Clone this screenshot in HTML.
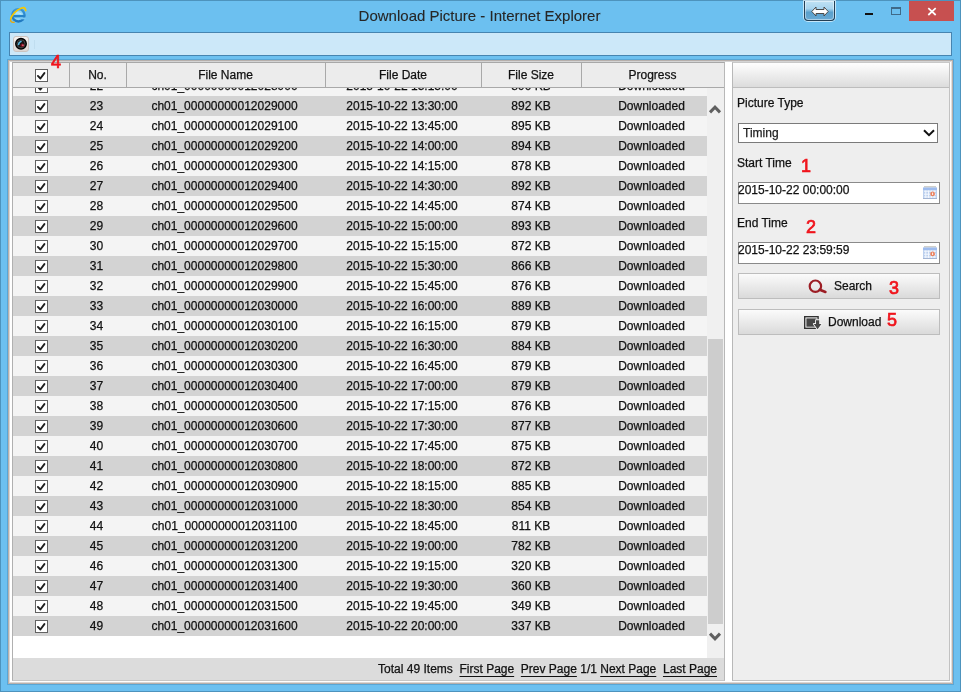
<!DOCTYPE html>
<html><head><meta charset="utf-8">
<style>
*{margin:0;padding:0;box-sizing:border-box}
html,body{width:961px;height:692px;overflow:hidden;background:#6cc0f0;font-family:"Liberation Sans",sans-serif;font-size:12px;color:#000;-webkit-text-stroke:0.25px currentColor}
.a{position:absolute}
.row{position:absolute;left:0;width:694px;height:20px}
.row .t{position:absolute;top:0;height:20px;line-height:20px;text-align:center;white-space:nowrap;color:#111}
.row .c{position:absolute;height:13px}
.cb{display:block}
.hd{position:absolute;top:0;height:25px;line-height:25px;text-align:center;color:#111;border-right:1px solid #a9a9a9}
.lbl{position:absolute;left:4px;color:#111}
.red{position:absolute;color:#f0141c;font-weight:normal;font-size:18px;-webkit-text-stroke:0.7px #f0141c}
.btn{position:absolute;left:6px;width:202px;height:26px;border:1px solid #bdbdbd;background:linear-gradient(#fbfbfb,#dadada)}
.inp{position:absolute;left:6px;width:202px;height:22px;border:1px solid #8a8a8a;background:#fff;line-height:14px;padding-left:0;text-indent:-1px;color:#111}
.ft a{color:#111;text-decoration:underline;text-underline-offset:3px;text-decoration-skip-ink:none}
</style></head><body><div style="position:absolute;left:0;top:0;width:961px;height:692px;will-change:transform">
<!-- window frame -->
<div class="a" style="left:0;top:0;width:961px;height:692px;border:1px solid #4d93bd;background:#6cc0f0"></div>
<!-- IE logo -->
<svg class="a" style="left:6px;top:4px" width="24" height="22" viewBox="0 0 24 22">
  <defs><linearGradient id="eg" x1="0" y1="0" x2="0" y2="1"><stop offset="0" stop-color="#3b97d8"/><stop offset="1" stop-color="#1f78c0"/></linearGradient></defs>
  <circle cx="12.4" cy="11.3" r="6.2" fill="#8fd6f6" stroke="url(#eg)" stroke-width="2.3"/>
  <path d="M7.2 12.2 H18.8" stroke="#2683c8" stroke-width="2.4"/>
  <path d="M13.8 13.5 H19.8 V15.3 H13.8Z" fill="#7cc8f2"/>
  <path d="M9.8 9.2 Q12.5 8 15.6 10.3" stroke="#bfe9fb" stroke-width="1.2" fill="none"/>
  <path d="M4.6 15.5 C5.5 11 10 6 15 4.2 C18 3.2 19.9 3.3 19.7 7.2" fill="none" stroke="#f7c800" stroke-width="1.7"/>
  <path d="M4.6 15.3 C4.2 17.5 5.6 18.8 8.6 18.2" fill="none" stroke="#f2a900" stroke-width="1.4"/>
</svg>
<!-- title -->
<div class="a" style="left:-1px;top:7px;width:961px;text-align:center;font-size:15px;color:#262626;-webkit-text-stroke:0.1px #262626">Download Picture - Internet Explorer</div>
<!-- title buttons -->
<div class="a" style="left:804px;top:1px;width:31px;height:20px;border:1px solid #233f55;border-top:none;border-radius:0 0 4px 4px;background:linear-gradient(#c0e2f4 0%,#a8d4ee 40%,#5aa0cc 60%,#6aaad4 100%);box-shadow:0 0 0 1px rgba(255,255,255,.6), inset 0 0 0 1px rgba(255,255,255,.45)"></div>
<svg class="a" style="left:811px;top:6px" width="18" height="11" viewBox="0 0 18 11"><path d="M0.8 5.5 L5 1 V3.5 H13 V1 L17.2 5.5 L13 10 V7.5 H5 V10 Z" fill="#fff" stroke="#4a4a4a" stroke-width="1"/></svg>
<div class="a" style="left:865px;top:13px;width:8px;height:2px;background:#111"></div>
<div class="a" style="left:891px;top:7px;width:10px;height:8px;border:1px solid #3f6a88;border-top-width:2px"></div>
<div class="a" style="left:909px;top:1px;width:45px;height:20px;background:#c75050"></div>
<svg class="a" style="left:927px;top:7px" width="10" height="9" viewBox="0 0 10 9"><path d="M1.3 1.2 L8.7 8 M8.7 1.2 L1.3 8" stroke="#fff" stroke-width="1.7"/></svg>

<!-- toolbar -->
<div class="a" style="left:9px;top:32px;width:943px;height:24px;border:1px solid #4684b0;background:#cce8f9"></div>
<div class="a" style="left:13px;top:36px;width:16px;height:16px;border-radius:3px;background:linear-gradient(#f6f3f1,#dcd6d3);border:1px solid #cbc3bf"></div>
<svg class="a" style="left:13px;top:36px" width="16" height="16" viewBox="0 0 16 16"><circle cx="8" cy="7.8" r="5.3" fill="#151515" stroke="#000" stroke-width="1.3"/><circle cx="8" cy="7.8" r="4" fill="none" stroke="#505050" stroke-width="0.8"/><path d="M5.6 8.4 C5.7 7.1 6.5 6 7.9 5.5" stroke="#5ab8e0" stroke-width="1.7" fill="none" stroke-linecap="round"/><circle cx="9.3" cy="9.3" r="1.8" fill="#7e1020"/><ellipse cx="9.9" cy="9.2" rx="1" ry="0.6" fill="#e8788a"/></svg>
<div class="a" style="left:34px;top:40px;width:1px;height:9px;background:#c0def0"></div>

<!-- content area -->
<div class="a" style="left:7px;top:59px;width:947px;height:626px;background:#58a6d6"></div>
<div class="a" style="left:8px;top:60px;width:945px;height:624px;border:1px solid #b6afab;background:#fff"></div>
<div class="a" style="left:9px;top:61px;width:943px;height:1px;background:#d4d4d4"></div>
<div class="a" style="left:9px;top:61px;width:1px;height:621px;background:#d8d8d8"></div>
<div class="a" style="left:9px;top:682px;width:943px;height:1px;background:#dad6d4"></div>
<div class="a" style="left:951px;top:61px;width:1px;height:622px;background:#e2dfdd"></div>

<!-- left table panel -->
<div class="a" style="left:12px;top:62px;width:713px;height:619px;border-left:1px solid #b0b0b0;border-top:1px solid #a8a8a8;border-right:1px solid #b8b8b8;border-bottom:1px solid #c6c6c6;background:#fff;overflow:hidden">
  <!-- header -->
  <div class="a" style="left:0;top:0;width:711px;height:25px;background:#ececec;border-bottom:1px solid #a9a9a9">
    <div class="hd" style="left:0;width:57px"><div class="a" style="left:22px;top:6px"><svg class="cb" width="13" height="13" viewBox="0 0 13 13"><rect x="0.5" y="0.5" width="12" height="12" fill="#fff" stroke="#626262"/><path d="M2.9 6.9 L5.4 9.5 L9.4 4.1" fill="none" stroke="#1e1e1e" stroke-width="1.9" stroke-linecap="round" stroke-linejoin="round"/></svg></div></div>
    <div class="hd" style="left:56px;width:58px">No.</div>
    <div class="hd" style="left:113px;width:200px">File Name</div>
    <div class="hd" style="left:312px;width:157px">File Date</div>
    <div class="hd" style="left:468px;width:101px">File Size</div>
    <div class="hd" style="left:568px;width:143px;border-right:none">Progress</div>
  </div>
  <!-- rows viewport -->
  <div class="a" style="left:0;top:25px;width:694px;height:570px;overflow:hidden;background:#fff">
<div class="row" style="top:-12px;background:#f4f4f4"><div class="c" style="left:22px;top:4px;width:13px"><svg class="cb" width="13" height="13" viewBox="0 0 13 13"><rect x="0.5" y="0.5" width="12" height="12" fill="#fff" stroke="#626262"/><path d="M2.9 6.9 L5.4 9.5 L9.4 4.1" fill="none" stroke="#1e1e1e" stroke-width="1.9" stroke-linecap="round" stroke-linejoin="round"/></svg></div><div class="t" style="left:55px;width:57px">22</div><div class="t" style="left:112px;width:199px">ch01_00000000012028900</div><div class="t" style="left:311px;width:156px">2015-10-22 13:15:00</div><div class="t" style="left:468px;width:100px">890 KB</div><div class="t" style="left:567px;width:143px">Downloaded</div></div>
<div class="row" style="top:8px;background:#d3d3d3"><div class="c" style="left:22px;top:4px;width:13px"><svg class="cb" width="13" height="13" viewBox="0 0 13 13"><rect x="0.5" y="0.5" width="12" height="12" fill="#fff" stroke="#626262"/><path d="M2.9 6.9 L5.4 9.5 L9.4 4.1" fill="none" stroke="#1e1e1e" stroke-width="1.9" stroke-linecap="round" stroke-linejoin="round"/></svg></div><div class="t" style="left:55px;width:57px">23</div><div class="t" style="left:112px;width:199px">ch01_00000000012029000</div><div class="t" style="left:311px;width:156px">2015-10-22 13:30:00</div><div class="t" style="left:468px;width:100px">892 KB</div><div class="t" style="left:567px;width:143px">Downloaded</div></div>
<div class="row" style="top:28px;background:#f4f4f4"><div class="c" style="left:22px;top:4px;width:13px"><svg class="cb" width="13" height="13" viewBox="0 0 13 13"><rect x="0.5" y="0.5" width="12" height="12" fill="#fff" stroke="#626262"/><path d="M2.9 6.9 L5.4 9.5 L9.4 4.1" fill="none" stroke="#1e1e1e" stroke-width="1.9" stroke-linecap="round" stroke-linejoin="round"/></svg></div><div class="t" style="left:55px;width:57px">24</div><div class="t" style="left:112px;width:199px">ch01_00000000012029100</div><div class="t" style="left:311px;width:156px">2015-10-22 13:45:00</div><div class="t" style="left:468px;width:100px">895 KB</div><div class="t" style="left:567px;width:143px">Downloaded</div></div>
<div class="row" style="top:48px;background:#d3d3d3"><div class="c" style="left:22px;top:4px;width:13px"><svg class="cb" width="13" height="13" viewBox="0 0 13 13"><rect x="0.5" y="0.5" width="12" height="12" fill="#fff" stroke="#626262"/><path d="M2.9 6.9 L5.4 9.5 L9.4 4.1" fill="none" stroke="#1e1e1e" stroke-width="1.9" stroke-linecap="round" stroke-linejoin="round"/></svg></div><div class="t" style="left:55px;width:57px">25</div><div class="t" style="left:112px;width:199px">ch01_00000000012029200</div><div class="t" style="left:311px;width:156px">2015-10-22 14:00:00</div><div class="t" style="left:468px;width:100px">894 KB</div><div class="t" style="left:567px;width:143px">Downloaded</div></div>
<div class="row" style="top:68px;background:#f4f4f4"><div class="c" style="left:22px;top:4px;width:13px"><svg class="cb" width="13" height="13" viewBox="0 0 13 13"><rect x="0.5" y="0.5" width="12" height="12" fill="#fff" stroke="#626262"/><path d="M2.9 6.9 L5.4 9.5 L9.4 4.1" fill="none" stroke="#1e1e1e" stroke-width="1.9" stroke-linecap="round" stroke-linejoin="round"/></svg></div><div class="t" style="left:55px;width:57px">26</div><div class="t" style="left:112px;width:199px">ch01_00000000012029300</div><div class="t" style="left:311px;width:156px">2015-10-22 14:15:00</div><div class="t" style="left:468px;width:100px">878 KB</div><div class="t" style="left:567px;width:143px">Downloaded</div></div>
<div class="row" style="top:88px;background:#d3d3d3"><div class="c" style="left:22px;top:4px;width:13px"><svg class="cb" width="13" height="13" viewBox="0 0 13 13"><rect x="0.5" y="0.5" width="12" height="12" fill="#fff" stroke="#626262"/><path d="M2.9 6.9 L5.4 9.5 L9.4 4.1" fill="none" stroke="#1e1e1e" stroke-width="1.9" stroke-linecap="round" stroke-linejoin="round"/></svg></div><div class="t" style="left:55px;width:57px">27</div><div class="t" style="left:112px;width:199px">ch01_00000000012029400</div><div class="t" style="left:311px;width:156px">2015-10-22 14:30:00</div><div class="t" style="left:468px;width:100px">892 KB</div><div class="t" style="left:567px;width:143px">Downloaded</div></div>
<div class="row" style="top:108px;background:#f4f4f4"><div class="c" style="left:22px;top:4px;width:13px"><svg class="cb" width="13" height="13" viewBox="0 0 13 13"><rect x="0.5" y="0.5" width="12" height="12" fill="#fff" stroke="#626262"/><path d="M2.9 6.9 L5.4 9.5 L9.4 4.1" fill="none" stroke="#1e1e1e" stroke-width="1.9" stroke-linecap="round" stroke-linejoin="round"/></svg></div><div class="t" style="left:55px;width:57px">28</div><div class="t" style="left:112px;width:199px">ch01_00000000012029500</div><div class="t" style="left:311px;width:156px">2015-10-22 14:45:00</div><div class="t" style="left:468px;width:100px">874 KB</div><div class="t" style="left:567px;width:143px">Downloaded</div></div>
<div class="row" style="top:128px;background:#d3d3d3"><div class="c" style="left:22px;top:4px;width:13px"><svg class="cb" width="13" height="13" viewBox="0 0 13 13"><rect x="0.5" y="0.5" width="12" height="12" fill="#fff" stroke="#626262"/><path d="M2.9 6.9 L5.4 9.5 L9.4 4.1" fill="none" stroke="#1e1e1e" stroke-width="1.9" stroke-linecap="round" stroke-linejoin="round"/></svg></div><div class="t" style="left:55px;width:57px">29</div><div class="t" style="left:112px;width:199px">ch01_00000000012029600</div><div class="t" style="left:311px;width:156px">2015-10-22 15:00:00</div><div class="t" style="left:468px;width:100px">893 KB</div><div class="t" style="left:567px;width:143px">Downloaded</div></div>
<div class="row" style="top:148px;background:#f4f4f4"><div class="c" style="left:22px;top:4px;width:13px"><svg class="cb" width="13" height="13" viewBox="0 0 13 13"><rect x="0.5" y="0.5" width="12" height="12" fill="#fff" stroke="#626262"/><path d="M2.9 6.9 L5.4 9.5 L9.4 4.1" fill="none" stroke="#1e1e1e" stroke-width="1.9" stroke-linecap="round" stroke-linejoin="round"/></svg></div><div class="t" style="left:55px;width:57px">30</div><div class="t" style="left:112px;width:199px">ch01_00000000012029700</div><div class="t" style="left:311px;width:156px">2015-10-22 15:15:00</div><div class="t" style="left:468px;width:100px">872 KB</div><div class="t" style="left:567px;width:143px">Downloaded</div></div>
<div class="row" style="top:168px;background:#d3d3d3"><div class="c" style="left:22px;top:4px;width:13px"><svg class="cb" width="13" height="13" viewBox="0 0 13 13"><rect x="0.5" y="0.5" width="12" height="12" fill="#fff" stroke="#626262"/><path d="M2.9 6.9 L5.4 9.5 L9.4 4.1" fill="none" stroke="#1e1e1e" stroke-width="1.9" stroke-linecap="round" stroke-linejoin="round"/></svg></div><div class="t" style="left:55px;width:57px">31</div><div class="t" style="left:112px;width:199px">ch01_00000000012029800</div><div class="t" style="left:311px;width:156px">2015-10-22 15:30:00</div><div class="t" style="left:468px;width:100px">866 KB</div><div class="t" style="left:567px;width:143px">Downloaded</div></div>
<div class="row" style="top:188px;background:#f4f4f4"><div class="c" style="left:22px;top:4px;width:13px"><svg class="cb" width="13" height="13" viewBox="0 0 13 13"><rect x="0.5" y="0.5" width="12" height="12" fill="#fff" stroke="#626262"/><path d="M2.9 6.9 L5.4 9.5 L9.4 4.1" fill="none" stroke="#1e1e1e" stroke-width="1.9" stroke-linecap="round" stroke-linejoin="round"/></svg></div><div class="t" style="left:55px;width:57px">32</div><div class="t" style="left:112px;width:199px">ch01_00000000012029900</div><div class="t" style="left:311px;width:156px">2015-10-22 15:45:00</div><div class="t" style="left:468px;width:100px">876 KB</div><div class="t" style="left:567px;width:143px">Downloaded</div></div>
<div class="row" style="top:208px;background:#d3d3d3"><div class="c" style="left:22px;top:4px;width:13px"><svg class="cb" width="13" height="13" viewBox="0 0 13 13"><rect x="0.5" y="0.5" width="12" height="12" fill="#fff" stroke="#626262"/><path d="M2.9 6.9 L5.4 9.5 L9.4 4.1" fill="none" stroke="#1e1e1e" stroke-width="1.9" stroke-linecap="round" stroke-linejoin="round"/></svg></div><div class="t" style="left:55px;width:57px">33</div><div class="t" style="left:112px;width:199px">ch01_00000000012030000</div><div class="t" style="left:311px;width:156px">2015-10-22 16:00:00</div><div class="t" style="left:468px;width:100px">889 KB</div><div class="t" style="left:567px;width:143px">Downloaded</div></div>
<div class="row" style="top:228px;background:#f4f4f4"><div class="c" style="left:22px;top:4px;width:13px"><svg class="cb" width="13" height="13" viewBox="0 0 13 13"><rect x="0.5" y="0.5" width="12" height="12" fill="#fff" stroke="#626262"/><path d="M2.9 6.9 L5.4 9.5 L9.4 4.1" fill="none" stroke="#1e1e1e" stroke-width="1.9" stroke-linecap="round" stroke-linejoin="round"/></svg></div><div class="t" style="left:55px;width:57px">34</div><div class="t" style="left:112px;width:199px">ch01_00000000012030100</div><div class="t" style="left:311px;width:156px">2015-10-22 16:15:00</div><div class="t" style="left:468px;width:100px">879 KB</div><div class="t" style="left:567px;width:143px">Downloaded</div></div>
<div class="row" style="top:248px;background:#d3d3d3"><div class="c" style="left:22px;top:4px;width:13px"><svg class="cb" width="13" height="13" viewBox="0 0 13 13"><rect x="0.5" y="0.5" width="12" height="12" fill="#fff" stroke="#626262"/><path d="M2.9 6.9 L5.4 9.5 L9.4 4.1" fill="none" stroke="#1e1e1e" stroke-width="1.9" stroke-linecap="round" stroke-linejoin="round"/></svg></div><div class="t" style="left:55px;width:57px">35</div><div class="t" style="left:112px;width:199px">ch01_00000000012030200</div><div class="t" style="left:311px;width:156px">2015-10-22 16:30:00</div><div class="t" style="left:468px;width:100px">884 KB</div><div class="t" style="left:567px;width:143px">Downloaded</div></div>
<div class="row" style="top:268px;background:#f4f4f4"><div class="c" style="left:22px;top:4px;width:13px"><svg class="cb" width="13" height="13" viewBox="0 0 13 13"><rect x="0.5" y="0.5" width="12" height="12" fill="#fff" stroke="#626262"/><path d="M2.9 6.9 L5.4 9.5 L9.4 4.1" fill="none" stroke="#1e1e1e" stroke-width="1.9" stroke-linecap="round" stroke-linejoin="round"/></svg></div><div class="t" style="left:55px;width:57px">36</div><div class="t" style="left:112px;width:199px">ch01_00000000012030300</div><div class="t" style="left:311px;width:156px">2015-10-22 16:45:00</div><div class="t" style="left:468px;width:100px">879 KB</div><div class="t" style="left:567px;width:143px">Downloaded</div></div>
<div class="row" style="top:288px;background:#d3d3d3"><div class="c" style="left:22px;top:4px;width:13px"><svg class="cb" width="13" height="13" viewBox="0 0 13 13"><rect x="0.5" y="0.5" width="12" height="12" fill="#fff" stroke="#626262"/><path d="M2.9 6.9 L5.4 9.5 L9.4 4.1" fill="none" stroke="#1e1e1e" stroke-width="1.9" stroke-linecap="round" stroke-linejoin="round"/></svg></div><div class="t" style="left:55px;width:57px">37</div><div class="t" style="left:112px;width:199px">ch01_00000000012030400</div><div class="t" style="left:311px;width:156px">2015-10-22 17:00:00</div><div class="t" style="left:468px;width:100px">879 KB</div><div class="t" style="left:567px;width:143px">Downloaded</div></div>
<div class="row" style="top:308px;background:#f4f4f4"><div class="c" style="left:22px;top:4px;width:13px"><svg class="cb" width="13" height="13" viewBox="0 0 13 13"><rect x="0.5" y="0.5" width="12" height="12" fill="#fff" stroke="#626262"/><path d="M2.9 6.9 L5.4 9.5 L9.4 4.1" fill="none" stroke="#1e1e1e" stroke-width="1.9" stroke-linecap="round" stroke-linejoin="round"/></svg></div><div class="t" style="left:55px;width:57px">38</div><div class="t" style="left:112px;width:199px">ch01_00000000012030500</div><div class="t" style="left:311px;width:156px">2015-10-22 17:15:00</div><div class="t" style="left:468px;width:100px">876 KB</div><div class="t" style="left:567px;width:143px">Downloaded</div></div>
<div class="row" style="top:328px;background:#d3d3d3"><div class="c" style="left:22px;top:4px;width:13px"><svg class="cb" width="13" height="13" viewBox="0 0 13 13"><rect x="0.5" y="0.5" width="12" height="12" fill="#fff" stroke="#626262"/><path d="M2.9 6.9 L5.4 9.5 L9.4 4.1" fill="none" stroke="#1e1e1e" stroke-width="1.9" stroke-linecap="round" stroke-linejoin="round"/></svg></div><div class="t" style="left:55px;width:57px">39</div><div class="t" style="left:112px;width:199px">ch01_00000000012030600</div><div class="t" style="left:311px;width:156px">2015-10-22 17:30:00</div><div class="t" style="left:468px;width:100px">877 KB</div><div class="t" style="left:567px;width:143px">Downloaded</div></div>
<div class="row" style="top:348px;background:#f4f4f4"><div class="c" style="left:22px;top:4px;width:13px"><svg class="cb" width="13" height="13" viewBox="0 0 13 13"><rect x="0.5" y="0.5" width="12" height="12" fill="#fff" stroke="#626262"/><path d="M2.9 6.9 L5.4 9.5 L9.4 4.1" fill="none" stroke="#1e1e1e" stroke-width="1.9" stroke-linecap="round" stroke-linejoin="round"/></svg></div><div class="t" style="left:55px;width:57px">40</div><div class="t" style="left:112px;width:199px">ch01_00000000012030700</div><div class="t" style="left:311px;width:156px">2015-10-22 17:45:00</div><div class="t" style="left:468px;width:100px">875 KB</div><div class="t" style="left:567px;width:143px">Downloaded</div></div>
<div class="row" style="top:368px;background:#d3d3d3"><div class="c" style="left:22px;top:4px;width:13px"><svg class="cb" width="13" height="13" viewBox="0 0 13 13"><rect x="0.5" y="0.5" width="12" height="12" fill="#fff" stroke="#626262"/><path d="M2.9 6.9 L5.4 9.5 L9.4 4.1" fill="none" stroke="#1e1e1e" stroke-width="1.9" stroke-linecap="round" stroke-linejoin="round"/></svg></div><div class="t" style="left:55px;width:57px">41</div><div class="t" style="left:112px;width:199px">ch01_00000000012030800</div><div class="t" style="left:311px;width:156px">2015-10-22 18:00:00</div><div class="t" style="left:468px;width:100px">872 KB</div><div class="t" style="left:567px;width:143px">Downloaded</div></div>
<div class="row" style="top:388px;background:#f4f4f4"><div class="c" style="left:22px;top:4px;width:13px"><svg class="cb" width="13" height="13" viewBox="0 0 13 13"><rect x="0.5" y="0.5" width="12" height="12" fill="#fff" stroke="#626262"/><path d="M2.9 6.9 L5.4 9.5 L9.4 4.1" fill="none" stroke="#1e1e1e" stroke-width="1.9" stroke-linecap="round" stroke-linejoin="round"/></svg></div><div class="t" style="left:55px;width:57px">42</div><div class="t" style="left:112px;width:199px">ch01_00000000012030900</div><div class="t" style="left:311px;width:156px">2015-10-22 18:15:00</div><div class="t" style="left:468px;width:100px">885 KB</div><div class="t" style="left:567px;width:143px">Downloaded</div></div>
<div class="row" style="top:408px;background:#d3d3d3"><div class="c" style="left:22px;top:4px;width:13px"><svg class="cb" width="13" height="13" viewBox="0 0 13 13"><rect x="0.5" y="0.5" width="12" height="12" fill="#fff" stroke="#626262"/><path d="M2.9 6.9 L5.4 9.5 L9.4 4.1" fill="none" stroke="#1e1e1e" stroke-width="1.9" stroke-linecap="round" stroke-linejoin="round"/></svg></div><div class="t" style="left:55px;width:57px">43</div><div class="t" style="left:112px;width:199px">ch01_00000000012031000</div><div class="t" style="left:311px;width:156px">2015-10-22 18:30:00</div><div class="t" style="left:468px;width:100px">854 KB</div><div class="t" style="left:567px;width:143px">Downloaded</div></div>
<div class="row" style="top:428px;background:#f4f4f4"><div class="c" style="left:22px;top:4px;width:13px"><svg class="cb" width="13" height="13" viewBox="0 0 13 13"><rect x="0.5" y="0.5" width="12" height="12" fill="#fff" stroke="#626262"/><path d="M2.9 6.9 L5.4 9.5 L9.4 4.1" fill="none" stroke="#1e1e1e" stroke-width="1.9" stroke-linecap="round" stroke-linejoin="round"/></svg></div><div class="t" style="left:55px;width:57px">44</div><div class="t" style="left:112px;width:199px">ch01_00000000012031100</div><div class="t" style="left:311px;width:156px">2015-10-22 18:45:00</div><div class="t" style="left:468px;width:100px">811 KB</div><div class="t" style="left:567px;width:143px">Downloaded</div></div>
<div class="row" style="top:448px;background:#d3d3d3"><div class="c" style="left:22px;top:4px;width:13px"><svg class="cb" width="13" height="13" viewBox="0 0 13 13"><rect x="0.5" y="0.5" width="12" height="12" fill="#fff" stroke="#626262"/><path d="M2.9 6.9 L5.4 9.5 L9.4 4.1" fill="none" stroke="#1e1e1e" stroke-width="1.9" stroke-linecap="round" stroke-linejoin="round"/></svg></div><div class="t" style="left:55px;width:57px">45</div><div class="t" style="left:112px;width:199px">ch01_00000000012031200</div><div class="t" style="left:311px;width:156px">2015-10-22 19:00:00</div><div class="t" style="left:468px;width:100px">782 KB</div><div class="t" style="left:567px;width:143px">Downloaded</div></div>
<div class="row" style="top:468px;background:#f4f4f4"><div class="c" style="left:22px;top:4px;width:13px"><svg class="cb" width="13" height="13" viewBox="0 0 13 13"><rect x="0.5" y="0.5" width="12" height="12" fill="#fff" stroke="#626262"/><path d="M2.9 6.9 L5.4 9.5 L9.4 4.1" fill="none" stroke="#1e1e1e" stroke-width="1.9" stroke-linecap="round" stroke-linejoin="round"/></svg></div><div class="t" style="left:55px;width:57px">46</div><div class="t" style="left:112px;width:199px">ch01_00000000012031300</div><div class="t" style="left:311px;width:156px">2015-10-22 19:15:00</div><div class="t" style="left:468px;width:100px">320 KB</div><div class="t" style="left:567px;width:143px">Downloaded</div></div>
<div class="row" style="top:488px;background:#d3d3d3"><div class="c" style="left:22px;top:4px;width:13px"><svg class="cb" width="13" height="13" viewBox="0 0 13 13"><rect x="0.5" y="0.5" width="12" height="12" fill="#fff" stroke="#626262"/><path d="M2.9 6.9 L5.4 9.5 L9.4 4.1" fill="none" stroke="#1e1e1e" stroke-width="1.9" stroke-linecap="round" stroke-linejoin="round"/></svg></div><div class="t" style="left:55px;width:57px">47</div><div class="t" style="left:112px;width:199px">ch01_00000000012031400</div><div class="t" style="left:311px;width:156px">2015-10-22 19:30:00</div><div class="t" style="left:468px;width:100px">360 KB</div><div class="t" style="left:567px;width:143px">Downloaded</div></div>
<div class="row" style="top:508px;background:#f4f4f4"><div class="c" style="left:22px;top:4px;width:13px"><svg class="cb" width="13" height="13" viewBox="0 0 13 13"><rect x="0.5" y="0.5" width="12" height="12" fill="#fff" stroke="#626262"/><path d="M2.9 6.9 L5.4 9.5 L9.4 4.1" fill="none" stroke="#1e1e1e" stroke-width="1.9" stroke-linecap="round" stroke-linejoin="round"/></svg></div><div class="t" style="left:55px;width:57px">48</div><div class="t" style="left:112px;width:199px">ch01_00000000012031500</div><div class="t" style="left:311px;width:156px">2015-10-22 19:45:00</div><div class="t" style="left:468px;width:100px">349 KB</div><div class="t" style="left:567px;width:143px">Downloaded</div></div>
<div class="row" style="top:528px;background:#d3d3d3"><div class="c" style="left:22px;top:4px;width:13px"><svg class="cb" width="13" height="13" viewBox="0 0 13 13"><rect x="0.5" y="0.5" width="12" height="12" fill="#fff" stroke="#626262"/><path d="M2.9 6.9 L5.4 9.5 L9.4 4.1" fill="none" stroke="#1e1e1e" stroke-width="1.9" stroke-linecap="round" stroke-linejoin="round"/></svg></div><div class="t" style="left:55px;width:57px">49</div><div class="t" style="left:112px;width:199px">ch01_00000000012031600</div><div class="t" style="left:311px;width:156px">2015-10-22 20:00:00</div><div class="t" style="left:468px;width:100px">337 KB</div><div class="t" style="left:567px;width:143px">Downloaded</div></div>
  </div>
  <!-- scrollbar -->
  <div class="a" style="left:694px;top:25px;width:17px;height:570px;background:#f0f0f0"></div>
  <div class="a" style="left:695px;top:276px;width:15px;height:285px;background:#cdcdcd"></div>
  <svg class="a" style="left:695px;top:41px" width="14" height="10" viewBox="0 0 14 10"><path d="M2 8.4 L7 3.2 L12 8.4" fill="none" stroke="#606060" stroke-width="3"/></svg>
  <svg class="a" style="left:695px;top:569px" width="14" height="10" viewBox="0 0 14 10"><path d="M2 1.6 L7 6.8 L12 1.6" fill="none" stroke="#606060" stroke-width="3"/></svg>
  <!-- footer -->
  <div class="a ft" style="left:0;top:595px;width:711px;height:22px;background:#dcdcdc;color:#111">
    <div class="a" style="right:7px;top:4px;white-space:nowrap;word-spacing:0px">Total 49 Items &nbsp;<a>First Page</a>&nbsp; <a>Prev Page</a> 1/1 <a>Next Page</a>&nbsp; <a>Last Page</a></div>
  </div>
</div>
<!-- red 4 -->
<div class="red" style="left:51px;top:52px">4</div>

<!-- right panel -->
<div class="a" style="left:732px;top:62px;width:218px;height:619px;border:1px solid #c2c2c2;border-top:1px solid #c8c8c8;border-left:1px solid #b8b8b8;background:#eeeeee">
  <div class="a" style="left:0;top:0;width:216px;height:25px;background:linear-gradient(#fefefe,#dcdcdc);border-bottom:1px solid #bdbdbd"></div>
  <div class="lbl" style="top:33px">Picture Type</div>
  <div class="a" style="left:5px;top:60px;width:200px;height:20px;border:1px solid #7a7a7a;background:#fff;color:#222;padding-left:4px;line-height:18px">Timing</div>
  <svg class="a" style="left:190px;top:66px" width="12" height="8" viewBox="0 0 12 8"><path d="M1 1.2 L6 6.2 L11 1.2" fill="none" stroke="#111" stroke-width="2"/></svg>
  <div class="lbl" style="top:93px">Start Time</div>
  <div class="red" style="left:68px;top:93px">1</div>
  <div class="inp" style="left:5px;top:119px">2015-10-22 00:00:00</div>
  <svg class="a" style="left:190px;top:123px" width="14" height="13" viewBox="0 0 14 13"><rect x="1" y="0" width="12" height="1.6" fill="#cfcfcc"/><rect x="0" y="1.6" width="14" height="11.2" fill="#bcd0ee"/><rect x="0" y="1.6" width="14" height="2.4" fill="#9dbbee"/><path d="M1 5.2 H13 M1 8.2 H13 M1 11 H13 M2.8 4.5 V12 M5.6 4.5 V12 M8.4 4.5 V12 M11.2 4.5 V12" stroke="#f4f8fe" stroke-width="1"/><rect x="0" y="12" width="14" height="0.8" fill="#9aaccc"/><circle cx="9.6" cy="7.9" r="2.4" fill="#ea8462"/><path d="M9.6 6.6 V9" stroke="#fff" stroke-width="0.9"/></svg>
  <div class="lbl" style="top:153px">End Time</div>
  <div class="red" style="left:73px;top:154px">2</div>
  <div class="inp" style="left:5px;top:179px">2015-10-22 23:59:59</div>
  <svg class="a" style="left:190px;top:183px" width="14" height="13" viewBox="0 0 14 13"><rect x="1" y="0" width="12" height="1.6" fill="#cfcfcc"/><rect x="0" y="1.6" width="14" height="11.2" fill="#bcd0ee"/><rect x="0" y="1.6" width="14" height="2.4" fill="#9dbbee"/><path d="M1 5.2 H13 M1 8.2 H13 M1 11 H13 M2.8 4.5 V12 M5.6 4.5 V12 M8.4 4.5 V12 M11.2 4.5 V12" stroke="#f4f8fe" stroke-width="1"/><rect x="0" y="12" width="14" height="0.8" fill="#9aaccc"/><circle cx="9.6" cy="7.9" r="2.4" fill="#ea8462"/><path d="M9.6 6.6 V9" stroke="#fff" stroke-width="0.9"/></svg>
  <div class="btn" style="left:5px;top:210px"></div>
  <svg class="a" style="left:74px;top:216px" width="22" height="16" viewBox="0 0 22 16"><circle cx="8.4" cy="7.2" r="5.7" fill="none" stroke="#9c1d24" stroke-width="2.2"/><path d="M12.8 10.8 L18.4 12.9" stroke="#9c1d24" stroke-width="2.7" stroke-linecap="round"/></svg>
<div class="a" style="left:101px;top:216px;color:#111">Search</div>
  <div class="red" style="left:156px;top:215px">3</div>
  <div class="btn" style="left:5px;top:246px"></div>
  <svg class="a" style="left:71px;top:253px" width="20" height="15" viewBox="0 0 20 15"><rect x="0.7" y="0.7" width="13.4" height="11.6" fill="#fafafa" stroke="#333" stroke-width="1.4"/><rect x="2.4" y="2.4" width="10.2" height="8.3" fill="#474747"/><path d="M12 4.2 H15.2 V8 H17.4 L13.6 13.2 L9.8 8 H12 Z" fill="#474747" stroke="#f4f4f4" stroke-width="1.8" paint-order="stroke" stroke-linejoin="round"/></svg>
<div class="a" style="left:95px;top:252px;color:#111">Download</div>
  <div class="red" style="left:154px;top:247px">5</div>
</div>
</div></body></html>
